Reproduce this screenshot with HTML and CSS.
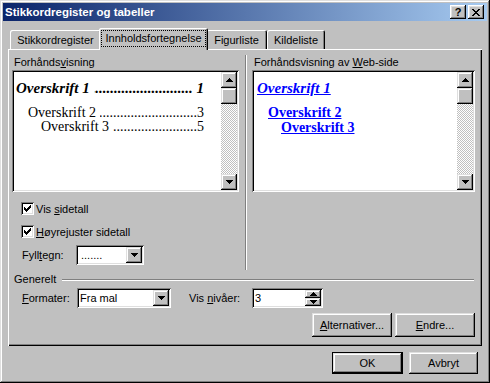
FILE: index.html
```html
<!DOCTYPE html>
<html lang="no">
<head>
  <meta charset="UTF-8">
  <title>Stikkordregister og tabeller</title>
  <link rel="stylesheet" href="styles.css">
</head>
<body>
  <div class="window">
    <div class="titlebar">
      <span class="title">Stikkordregister og tabeller</span>
      <div class="title-buttons">
        <span class="tbtn help">?</span>
        <span class="tbtn close">
          <svg width="8" height="7" viewBox="0 0 8 7"><path d="M0 0h2v1h1v1h2V1h1V0h2v1H7v1H6v1H5v1h1v1h1v1h1v1H6V6H5V5H3v1H2v1H0V6h1V5h1V4h1V3H2V2H1V1H0z" fill="#000"/></svg>
        </span>
      </div>
    </div>

    <div class="content">
      <div class="tabs">
        <div class="tab first">Stikkordregister</div>
        <div class="tab active"><span class="focus">Innholdsfortegnelse</span></div>
        <div class="tab third">Figurliste</div>
        <div class="tab">Kildeliste</div>
      </div>

      <div class="panel">
        <div class="top">
          <div class="col col-left">
            <div class="label">Forhånds<u>v</u>isning</div>
            <div class="preview">
              <div class="page print">
                <div class="toc toc1"><span>Overskrift 1&nbsp;</span><span class="lead"></span><span>&nbsp;1</span></div>
                <div class="toc toc2"><span>Overskrift 2&nbsp;</span><span class="lead"></span><span>3</span></div>
                <div class="toc toc3"><span>Overskrift 3&nbsp;</span><span class="lead"></span><span>5</span></div>
              </div>
              <div class="scrollbar">
                <span class="sbtn"><svg width="7" height="4" viewBox="0 0 7 4"><path d="M3 0h1v1h1v1h1v1h1v1H0V3h1V2h1V1h1z"/></svg></span>
                <span class="thumb"></span>
                <span class="track"></span>
                <span class="sbtn"><svg width="7" height="4" viewBox="0 0 7 4"><path d="M0 0h7v1H6v1H5v1H4v1H3V3H2V2H1V1H0z"/></svg></span>
              </div>
            </div>

            <div class="check-row first-check">
              <span class="checkbox"><svg width="7" height="7" viewBox="0 0 7 7"><path d="M6 0h1v3H6v1H5v1H4v1H3v1H2V6H1V5H0V2h1v1h1v1h1V3h1V2h1V1h1z"/></svg></span>
              <span>Vis <u>s</u>idetall</span>
            </div>
            <div class="check-row">
              <span class="checkbox"><svg width="7" height="7" viewBox="0 0 7 7"><path d="M6 0h1v3H6v1H5v1H4v1H3v1H2V6H1V5H0V2h1v1h1v1h1V3h1V2h1V1h1z"/></svg></span>
              <span><u>H</u>øyrejuster sidetall</span>
            </div>
            <div class="field-row fill-row">
              <span class="field-label fill-label">Fyll<u>t</u>egn:</span>
              <div class="combo fill-combo">
                <span class="combo-text">.......</span>
                <span class="combo-btn"><svg width="7" height="4" viewBox="0 0 7 4"><path d="M0 0h7v1H6v1H5v1H4v1H3V3H2V2H1V1H0z"/></svg></span>
              </div>
            </div>
          </div>

          <div class="vsep"></div>

          <div class="col col-right">
            <div class="label">Forhåndsvisning av <u>W</u>eb-side</div>
            <div class="preview">
              <div class="page web">
                <div class="web1"><a>Overskrift 1</a></div>
                <div class="web2"><a>Overskrift 2</a></div>
                <div class="web3"><a>Overskrift 3</a></div>
              </div>
              <div class="scrollbar">
                <span class="sbtn"><svg width="7" height="4" viewBox="0 0 7 4"><path d="M3 0h1v1h1v1h1v1h1v1H0V3h1V2h1V1h1z"/></svg></span>
                <span class="thumb"></span>
                <span class="track"></span>
                <span class="sbtn"><svg width="7" height="4" viewBox="0 0 7 4"><path d="M0 0h7v1H6v1H5v1H4v1H3V3H2V2H1V1H0z"/></svg></span>
              </div>
            </div>
          </div>
        </div>

        <div class="group-head">
          <span>Generelt</span>
          <span class="hline"></span>
        </div>

        <div class="field-row format-row">
          <span class="field-label format-label"><u>F</u>ormater:</span>
          <div class="combo format-combo">
            <span class="combo-text">Fra mal</span>
            <span class="combo-btn"><svg width="7" height="4" viewBox="0 0 7 4"><path d="M0 0h7v1H6v1H5v1H4v1H3V3H2V2H1V1H0z"/></svg></span>
          </div>
          <span class="field-label level-label">Vis <u>n</u>ivåer:</span>
          <div class="spin">
            <span class="combo-text">3</span>
            <span class="spin-btns">
              <span class="spin-btn"><svg width="7" height="4" viewBox="0 0 7 4"><path d="M3 0h1v1h1v1h1v1h1v1H0V3h1V2h1V1h1z"/></svg></span>
              <span class="spin-btn"><svg width="7" height="4" viewBox="0 0 7 4"><path d="M0 0h7v1H6v1H5v1H4v1H3V3H2V2H1V1H0z"/></svg></span>
            </span>
          </div>
        </div>

        <div class="panel-buttons">
          <span class="btn"><u>A</u>lternativer...</span>
          <span class="btn"><u>E</u>ndre...</span>
        </div>
      </div>

      <div class="dialog-buttons">
        <span class="btn default ok">OK</span>
        <span class="btn cancel">Avbryt</span>
      </div>
    </div>
  </div>
</body>
</html>
```

FILE: styles.css
```css
* {
  margin: 0;
  padding: 0;
  box-sizing: border-box;
}
body {
  background: #c0c0c0;
  font-family: "Liberation Sans", Arial, sans-serif;
  font-size: 11px;
  color: #000;
}
svg {
  display: block;
  shape-rendering: crispEdges;
}
.window {
  width: 490px;
  height: 383px;
  padding: 3px;
  background: #c0c0c0;
  box-shadow: inset -1px -1px #000, inset 1px 1px #dfdfdf, inset -2px -2px #808080, inset 2px 2px #fff;
}

/* title bar */
.titlebar {
  height: 18px;
  display: flex;
  align-items: center;
  justify-content: space-between;
  padding: 0 3px 0 2px;
  background: linear-gradient(to right, #0a246a, #a6caf0);
}
.title {
  color: #fff;
  font-weight: bold;
  font-size: 11.5px;
}
.title-buttons {
  display: flex;
  gap: 2px;
}
.tbtn {
  width: 16px;
  height: 14px;
  display: flex;
  align-items: center;
  justify-content: center;
  background: #c0c0c0;
  font-weight: bold;
  font-size: 11px;
  line-height: 14px;
  box-shadow: inset -1px -1px #000, inset 1px 1px #fff, inset -2px -2px #808080, inset 2px 2px #dfdfdf;
}

.content {
  padding: 0 5px;
}

/* tabs */
.tabs {
  display: flex;
  align-items: flex-end;
  height: 21px;
  margin-top: 7px;
  padding-left: 2px;
}
.tab {
  height: 19px;
  display: flex;
  align-items: center;
  justify-content: center;
  background: #c0c0c0;
  border-radius: 2px 2px 0 0;
  box-shadow: inset 1px 1px #fff, inset -1px 0 #000, inset -2px 0 #808080;
  width: 58px;
}
.tab.first {
  width: 91px;
}
.tab.third {
  width: 61px;
}
.tab.active {
  width: 109px;
  height: 22px;
  margin: 0 -2px -1px -2px;
  position: relative;
  z-index: 1;
  align-items: flex-start;
  padding-top: 3px;
}
.focus {
  outline: 1px dotted #000;
  padding: 1px 3px;
  line-height: 13px;
}

/* panel */
.panel {
  height: 297px;
  padding: 7px 7px 0 4px;
  box-shadow: inset 1px 1px #fff, inset -1px -1px #000, inset -2px -2px #808080;
}
.top {
  display: flex;
  align-items: flex-start;
}
.col-left {
  width: 227px;
}
.col-right {
  width: 223px;
  margin-left: 5px;
}
.vsep {
  width: 2px;
  height: 215px;
  margin: -1px 0 0 6px;
  box-shadow: inset 1px 0 #808080, inset -1px 0 #fff;
}
.label {
  height: 13px;
  line-height: 13px;
  margin-bottom: 1px;
  padding-left: 2px;
}
.preview {
  height: 122px;
  display: flex;
  padding: 2px;
  background: #fff;
  box-shadow: inset 1px 1px #808080, inset -1px -1px #fff, inset 2px 2px #000, inset -2px -2px #dfdfdf;
}
.page {
  flex: 1;
  min-width: 0;
  font-family: "Liberation Serif", "Times New Roman", serif;
}

/* print preview */
.print {
  padding: 8px 17px 0 2px;
}
.toc {
  display: flex;
  white-space: nowrap;
}
.toc .lead {
  flex: 1;
  overflow: hidden;
  direction: rtl;
}
.toc .lead::after {
  content: "................................................................";
}
.toc1 {
  font-size: 15px;
  line-height: 16px;
  font-weight: bold;
  font-style: italic;
}
.toc2,
.toc3 {
  font-size: 14px;
  line-height: 14px;
}
.toc2 {
  margin-top: 10px;
  padding-left: 12px;
}
.toc3 {
  padding-left: 25px;
}

/* web preview */
.web {
  padding: 8px 0 0 3px;
  color: #0000ff;
  font-weight: bold;
}
.web a {
  text-decoration: underline;
}
.web1 {
  font-size: 15px;
  line-height: 16px;
  font-style: italic;
}
.web2,
.web3 {
  font-size: 14px;
  line-height: 14px;
}
.web2 {
  margin-top: 10px;
  padding-left: 11px;
}
.web3 {
  margin-top: 1px;
  padding-left: 24px;
}

/* scrollbar */
.scrollbar {
  width: 16px;
  display: flex;
  flex-direction: column;
}
.sbtn,
.thumb,
.combo-btn,
.spin-btn,
.btn {
  background: #c0c0c0;
  box-shadow: inset -1px -1px #000, inset 1px 1px #dfdfdf, inset -2px -2px #808080, inset 2px 2px #fff;
}
.sbtn {
  height: 16px;
  display: flex;
  align-items: center;
  justify-content: center;
}
.thumb {
  height: 16px;
}
.track {
  flex: 1;
  background: repeating-conic-gradient(#c0c0c0 0 25%, #fff 0 50%) 0 0 / 2px 2px;
}

/* checkboxes */
.check-row {
  height: 13px;
  display: flex;
  align-items: center;
  margin-top: 10px;
  padding-left: 9px;
}
.checkbox {
  width: 13px;
  height: 13px;
  margin-right: 2px;
  display: flex;
  align-items: center;
  justify-content: center;
  background: #fff;
  box-shadow: inset 1px 1px #808080, inset -1px -1px #fff, inset 2px 2px #000, inset -2px -2px #dfdfdf;
}

/* fields */
.field-row {
  display: flex;
  align-items: center;
  height: 20px;
  padding-left: 10px;
}
.fill-row {
  margin-top: 7px;
}
.fill-label {
  width: 54px;
}
.combo,
.spin {
  height: 20px;
  display: flex;
  padding: 2px;
  background: #fff;
  box-shadow: inset 1px 1px #808080, inset -1px -1px #fff, inset 2px 2px #000, inset -2px -2px #dfdfdf;
}
.combo-text {
  flex: 1;
  line-height: 16px;
  padding-left: 1px;
}
.combo-btn {
  width: 16px;
  display: flex;
  align-items: center;
  justify-content: center;
}
.fill-combo {
  width: 68px;
}
.fill-combo .combo-text {
  padding-left: 3px;
}

/* Generelt */
.group-head {
  display: flex;
  align-items: center;
  height: 13px;
  margin-top: 2px;
  padding-left: 2px;
}
.hline {
  flex: 1;
  height: 2px;
  margin: 2px 1px 0 6px;
  box-shadow: inset 0 1px #808080, inset 0 -1px #fff;
}
.format-row {
  margin-top: 3px;
}
.format-label {
  width: 55px;
}
.format-combo {
  width: 94px;
}
.level-label {
  width: 63px;
  margin-left: 18px;
}
.spin {
  width: 71px;
}
.spin-btns {
  width: 16px;
  display: flex;
  flex-direction: column;
}
.spin-btn {
  flex: 1;
  display: flex;
  align-items: center;
  justify-content: center;
}

/* buttons */
.btn {
  height: 24px;
  display: flex;
  align-items: center;
  justify-content: center;
}
.panel-buttons {
  display: flex;
  justify-content: flex-end;
  gap: 3px;
  margin-top: 5px;
}
.panel-buttons .btn {
  width: 80px;
}
.dialog-buttons {
  display: flex;
  justify-content: flex-end;
  gap: 6px;
  margin-top: 6px;
  padding-right: 4px;
}
.dialog-buttons .btn {
  height: 22px;
}
.ok {
  width: 71px;
}
.cancel {
  width: 69px;
}
.btn.default {
  border: 1px solid #000;
}
```
